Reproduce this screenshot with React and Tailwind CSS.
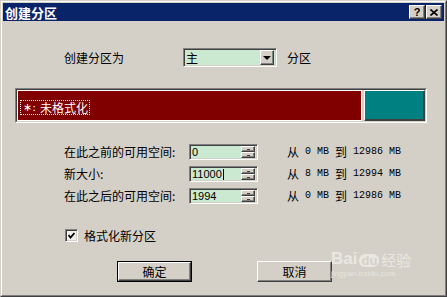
import React from "react";

const cjk = "font-['Noto_Sans_CJK_SC',sans-serif]";
const raised =
  "border border-t-white border-l-white border-r-[#404040] border-b-[#404040] shadow-[inset_-1px_-1px_0_#808080]";
const sunken =
  "border border-t-[#808080] border-l-[#808080] border-r-white border-b-white shadow-[inset_1px_1px_0_#404040,inset_-1px_-1px_0_#d4d0c8]";

const SpinBox = ({ value, caret }) => (
  <div className={`${sunken} w-[69px] h-[16px] bg-[#cbe8d0] flex items-center pl-[2px] pr-[2px]`}>
    <div className="flex-1 flex items-center font-['Liberation_Sans',sans-serif] text-[11px] leading-none text-black">
      {value}
      {caret && <span className="w-px h-[11px] bg-black ml-px" />}
    </div>
    <div className="flex flex-col w-[14px] h-[12px]">
      <div className={`${raised} flex-1 bg-[#d4d0c8] flex items-center justify-center`}>
        <span className="w-[3px] h-px bg-[#404040]" />
      </div>
      <div className={`${raised} flex-1 bg-[#d4d0c8] flex items-center justify-center`}>
        <span className="w-[3px] h-px bg-[#404040]" />
      </div>
    </div>
  </div>
);

const Range = ({ a, b }) => (
  <div className="font-['Liberation_Mono',monospace] text-[10px] leading-none text-black flex items-center whitespace-pre">
    <span className={`${cjk} text-[12px]`}>从</span>
    {` ${a} MB `}
    <span className={`${cjk} text-[12px]`}>到</span>
    {` ${b} MB`}
  </div>
);

const SizeRow = ({ label, value, a, b, caret }) => (
  <div className="flex items-center h-[16px] pl-[61px]">
    <div className={`${cjk} w-[125px] text-[12px] leading-none text-black`}>{label}</div>
    <SpinBox value={value} caret={caret} />
    <div className="w-[29px]" />
    <Range a={a} b={b} />
  </div>
);

export default function App() {
  return (
    <div className="w-[447px] h-[297px] bg-[#d4d0c8] relative overflow-hidden">
      <div className="w-[447px] h-[297px] border border-t-[#d4d0c8] border-l-[#d4d0c8] border-r-[#404040] border-b-[#404040]">
        <div className="h-full border border-t-white border-l-white border-r-[#808080] border-b-[#808080] p-px flex flex-col">
          {/* title bar */}
          <div className="h-[18px] bg-[#0a246a] flex items-center pl-[2px] pr-[2px]">
            <div className={`${cjk} flex-1 text-white font-bold text-[13px] leading-none`}>创建分区</div>
            <div className={`${raised} w-[16px] h-[14px] bg-[#d4d0c8] flex items-center justify-center font-['Liberation_Sans',sans-serif] font-bold text-[11px] leading-none text-black`}>
              ?
            </div>
            <div className={`${raised} w-[16px] h-[14px] bg-[#d4d0c8] flex items-center justify-center ml-px`}>
              <svg width="8" height="7" viewBox="0 0 8 7">
                <path d="M0.5 0.5 L7.5 6.5 M7.5 0.5 L0.5 6.5" stroke="black" strokeWidth="1.6" />
              </svg>
            </div>
          </div>

          {/* partition type */}
          <div className="flex items-center mt-[27px] pl-[61px] h-[19px]">
            <div className={`${cjk} w-[119px] text-[12px] leading-none text-black`}>创建分区为</div>
            <div className={`${sunken} w-[94px] h-[19px] bg-[#cbe8d0] flex items-center pl-[2px] pr-[2px]`}>
              <div className={`${cjk} flex-1 text-[12px] leading-none text-black`}>主</div>
              <div className={`${raised} w-[14px] h-[15px] bg-[#d4d0c8] flex items-center justify-center`}>
                <span className="border-x-[4px] border-x-transparent border-t-[4px] border-t-black" />
              </div>
            </div>
            <div className={`${cjk} ml-[10px] text-[12px] leading-none text-black`}>分区</div>
          </div>

          {/* partition bar */}
          <div className="mt-[21px] ml-[12px] w-[412px] h-[35px] border border-t-[#808080] border-l-[#808080] border-r-white border-b-white">
            <div className="h-full border border-t-[#404040] border-l-[#404040] border-r-[#d4d0c8] border-b-[#d4d0c8] flex gap-[2px] bg-[#d4d0c8]">
              <div className="flex-1 bg-[#800000] border border-white pl-[2px] pt-[2px]">
                <span className="inline-flex items-center border border-dotted border-white pl-[2px] pr-px h-[15px] text-[12px] leading-none text-white">
                  <span className="font-['DejaVu_Sans',sans-serif] text-[11px]">∗:</span>
                  <span className={`${cjk} ml-[4px]`}>未格式化</span>
                </span>
              </div>
              <div className="w-[61px] bg-[#008080] border border-t-white border-l-white border-r-[#404040] border-b-[#404040] shadow-[inset_-1px_-1px_0_#404040]" />
            </div>
          </div>

          {/* sizes */}
          <div className="mt-[21px] flex flex-col gap-[6px]">
            <SizeRow label="在此之前的可用空间:" value="0" a="0" b="12986" />
            <SizeRow label="新大小:" value="11000" a="8" b="12994" caret />
            <SizeRow label="在此之后的可用空间:" value="1994" a="0" b="12986" />
          </div>

          {/* format checkbox */}
          <div className="mt-[25px] pl-[62px] flex items-center h-[13px]">
            <div className={`${sunken} w-[13px] h-[13px] bg-[#eef1ea] flex items-center justify-center`}>
              <svg width="7" height="7" viewBox="0 0 7 7">
                <path d="M0.5 3 L2.5 5.5 L6.5 1" stroke="black" strokeWidth="1.8" fill="none" />
              </svg>
            </div>
            <div className={`${cjk} ml-[6px] text-[12px] leading-none text-black`}>格式化新分区</div>
          </div>

          {/* buttons */}
          <div className="mt-[19px] pl-[114px] flex gap-[65px]">
            <div className="w-[75px] h-[21px] border border-black">
              <div className={`${raised} h-full bg-[#d4d0c8] flex items-center justify-center ${cjk} text-[12px] leading-none text-black`}>
                确定
              </div>
            </div>
            <div className={`${raised} w-[75px] h-[21px] bg-[#d4d0c8] flex items-center justify-center ${cjk} text-[12px] leading-none text-black`}>
              取消
            </div>
          </div>
        </div>
      </div>

      {/* watermark */}
      <div className="absolute left-[331px] top-[250px] flex flex-col items-start pointer-events-none">
        <div className="flex items-end gap-[2px] font-['Liberation_Sans',sans-serif] font-bold text-[17px] leading-none text-[#efede8] opacity-80">
          <span>Bai</span>
          <span className="bg-[#efede8] text-[#d4d0c8] rounded-[6px] px-[2px] text-[13px]">du</span>
          <span className={`${cjk} text-[15px] font-normal`}>经验</span>
        </div>
        <div className="font-['Liberation_Sans',sans-serif] text-[8px] leading-none text-[#e6e4de] mt-[3px]">
          jingyan.baidu.com
        </div>
      </div>
    </div>
  );
}
